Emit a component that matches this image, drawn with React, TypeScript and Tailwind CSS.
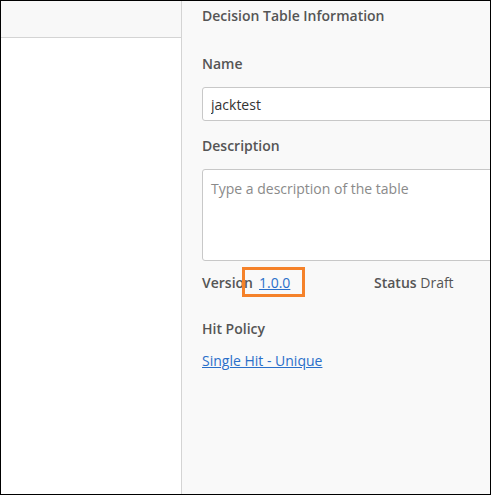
export default function App() {
  return (
    <div
      className="flex w-[491px] h-[495px] border border-black bg-white overflow-hidden text-[14px] text-[#555555]"
      style={{ fontFamily: '"Open Sans", "Noto Sans", sans-serif' }}
    >
      {/* Left panel */}
      <div className="w-[181px] shrink-0 border-r border-[#d4d4d4] bg-white">
        <div className="h-[37px] bg-[#f8f8f8] border-b border-[#d4d4d4]" />
      </div>

      {/* Right panel */}
      <div className="flex-1 min-w-0 bg-[#f9f9f9] pl-[20px] pt-[5px] overflow-hidden">
        <h2 className="leading-[20px] font-semibold text-[#555555]">Decision Table Information</h2>

        <label className="block mt-[28px] leading-[20px] font-semibold">Name</label>
        <input
          readOnly
          value="jacktest"
          className="block mt-[13px] w-[320px] h-[34px] px-[8px] bg-white border border-[#c8c8c8] rounded-[3px] text-[14px] text-[#333333] outline-none"
        />

        <label className="block mt-[15px] leading-[20px] font-semibold">Description</label>
        <textarea
          readOnly
          placeholder="Type a description of the table"
          className="block mt-[13px] w-[320px] h-[92px] px-[8px] pt-[9px] bg-white border border-[#c8c8c8] rounded-[3px] text-[14px] leading-[20px] text-[#333333] placeholder:text-[#8a8a8a] resize-none outline-none"
        />

        {/* Version / status */}
        <div className="flex mt-[12px] leading-[20px]">
          <div className="w-[172px] shrink-0">
            <span className="font-semibold">Version</span>
            <span className="relative ml-[6px]">
              <a href="#" className="text-[#2a6fc9] underline">1.0.0</a>
              <span className="absolute left-[-17px] top-[-6px] w-[63px] h-[30px] border-[3px] border-[#f5822a] pointer-events-none" />
            </span>
          </div>
          <div>
            <span className="font-semibold">Status</span> Draft
          </div>
        </div>

        <div className="mt-[26px] leading-[20px] font-semibold">Hit Policy</div>
        <a href="#" className="block mt-[12px] leading-[20px] text-[#2a6fc9] underline">
          Single Hit - Unique
        </a>
      </div>
    </div>
  )
}
